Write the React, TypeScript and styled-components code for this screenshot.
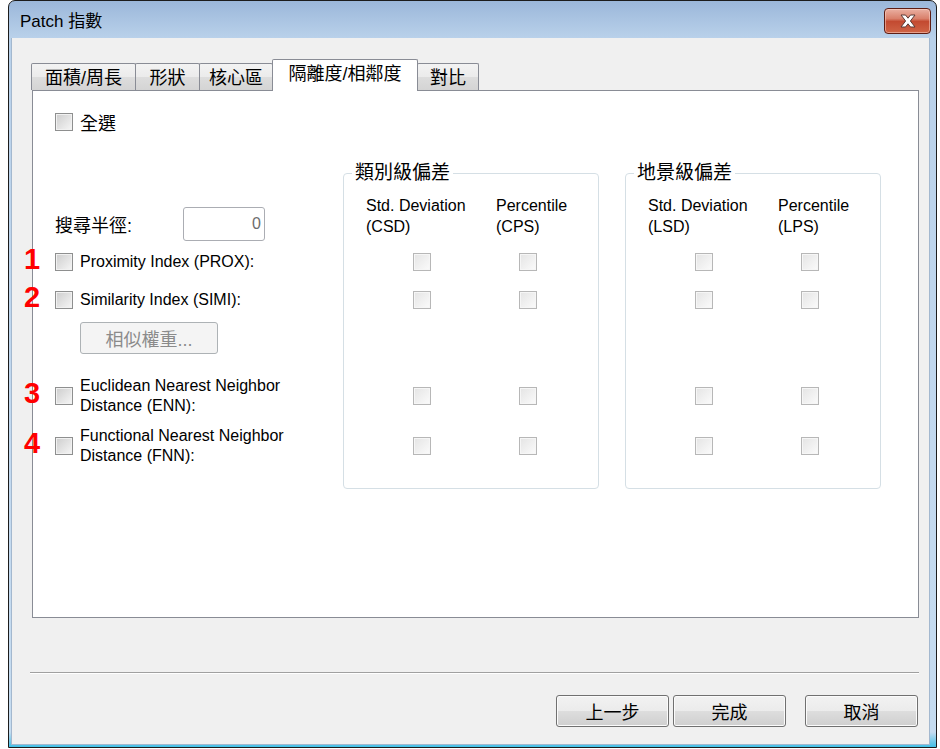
import React from 'react'
import styled, { createGlobalStyle } from 'styled-components'

const FONT = `'Liberation Sans', 'Noto Sans CJK TC', sans-serif`
const ROWS = '69px 38px 38px 55px 44px 56px'

const GlobalStyle = createGlobalStyle`
  html, body {
    margin: 0;
    padding: 0;
    background: #ffffff;
  }
  body {
    font-family: ${FONT};
    color: #000;
  }
  * {
    box-sizing: border-box;
  }
`

const Window = styled.div`
  margin-left: 8px;
  width: 929px;
  height: 748px;
  border: 1px solid #1c1c1c;
  border-radius: 7px 7px 0 0;
  background: linear-gradient(#9bb7da 0, #b9d1ea 37px, #c3d9ef 60%, #c6dcf0 98%, #41c0e6 100%);
  display: flex;
  flex-direction: column;
  overflow: hidden;
`

const TitleBar = styled.div`
  height: 37px;
  flex: none;
  display: flex;
  align-items: center;
  justify-content: space-between;
  padding: 0 5px 0 11px;
`

const Title = styled.span`
  font-size: 17px;
  color: #000;
`

const CloseButton = styled.div`
  align-self: flex-start;
  margin-top: 7px;
  width: 47px;
  height: 26px;
  border: 1px solid #5e1d14;
  border-radius: 4px;
  background: linear-gradient(#eab0a2 0%, #d9806b 40%, #c34a31 52%, #cf6446 100%);
  box-shadow: inset 0 0 0 1px rgba(255, 220, 210, 0.5);
  display: flex;
  align-items: center;
  justify-content: center;
`

const Client = styled.div`
  flex: 1;
  margin: 0 6px 2px 2px;
  border: 1px solid #a3b8cf;
  border-top: none;
  background: #f0f0f0;
  display: flex;
  flex-direction: column;
`

const TabStrip = styled.div`
  margin-top: 21px;
  padding-left: 19px;
  height: 31px;
  display: flex;
  align-items: flex-end;
`

const Tab = styled.div<{ $w: number; $active?: boolean }>`
  width: ${({ $w }) => $w}px;
  height: ${({ $active }) => ($active ? 32 : 27)}px;
  margin-left: -1px;
  margin-bottom: ${({ $active }) => ($active ? -1 : 0)}px;
  position: relative;
  z-index: ${({ $active }) => ($active ? 2 : 1)};
  border: 1px solid #898c95;
  border-bottom: none;
  border-radius: 2px 2px 0 0;
  background: ${({ $active }) =>
    $active ? '#ffffff' : 'linear-gradient(#f3f3f3, #ebebeb 50%, #dddddd 51%, #d4d4d4)'};
  display: flex;
  align-items: center;
  justify-content: center;
  padding-bottom: ${({ $active }) => ($active ? 7 : 2)}px;
  font-size: 18px;
  white-space: nowrap;
  &:first-child {
    margin-left: 0;
  }
`

const Panel = styled.div`
  margin-left: 20px;
  width: 887px;
  height: 528px;
  border: 1px solid #898c95;
  background: #ffffff;
  padding: 21px 0 0 22px;
  display: flex;
  flex-direction: column;
`

const CheckRow = styled.div`
  position: relative;
  display: flex;
  align-items: center;
  gap: 7px;
  font-size: 16px;
`

const SelectAll = styled(CheckRow)`
  height: 20px;
  font-size: 18px;
`

const Box = styled.span<{ $disabled?: boolean }>`
  display: inline-block;
  flex: none;
  width: 18px;
  height: 18px;
  border: 1px solid ${({ $disabled }) => ($disabled ? '#b7b7b7' : '#8e8f8f')};
  background: ${({ $disabled }) =>
    $disabled
      ? 'linear-gradient(135deg, #e4e4e4, #fbfbfb)'
      : 'linear-gradient(135deg, #cdcdcd, #f6f6f6)'};
  box-shadow: inset 0 0 0 1px ${({ $disabled }) => ($disabled ? '#f6f6f6' : '#f1f1f1')};
`

const Marker = styled.span`
  position: absolute;
  left: -31px;
  top: 50%;
  transform: translateY(-58%);
  font-family: 'Liberation Sans', sans-serif;
  font-weight: bold;
  font-size: 29px;
  line-height: 1;
  color: #ff0000;
`

const Main = styled.div`
  margin-top: 41px;
  display: flex;
  align-items: flex-start;
`

const LeftColumn = styled.div`
  width: 288px;
  padding-top: 1px;
  display: grid;
  grid-template-rows: ${ROWS};
`

const SearchRow = styled.div`
  align-self: end;
  margin-bottom: 2px;
  display: flex;
  align-items: center;
`

const SearchLabel = styled.span`
  width: 128px;
  font-size: 18px;
`

const NumberInput = styled.div`
  width: 82px;
  height: 34px;
  border: 1px solid #abadb3;
  border-radius: 3px;
  background: #ffffff;
  display: flex;
  align-items: center;
  justify-content: flex-end;
  padding-right: 3px;
  font-size: 16px;
  color: #6d6d6d;
`

const TwoLine = styled.span`
  line-height: 20px;
`

const WeightButton = styled.div`
  align-self: start;
  margin: 3px 0 0 25px;
  width: 138px;
  height: 32px;
  border: 1px solid #adb2b5;
  border-radius: 3px;
  background: #f4f4f4;
  color: #8b8b8b;
  font-size: 18px;
  display: flex;
  align-items: center;
  justify-content: center;
`

const Group = styled.div<{ $gap?: number }>`
  position: relative;
  margin-left: ${({ $gap }) => $gap ?? 0}px;
  width: 256px;
  height: 316px;
  border: 1px solid #d5dfe5;
  border-radius: 4px;
  padding-left: 25px;
  display: grid;
  grid-template-columns: 106px 106px;
  grid-template-rows: ${ROWS};
`

const Legend = styled.span`
  position: absolute;
  left: 8px;
  top: -12px;
  padding: 0 3px;
  background: #ffffff;
  font-size: 19px;
  line-height: 22px;
`

const ColHeader = styled.div<{ $shift: number }>`
  align-self: end;
  justify-self: start;
  margin: 0 0 6px ${({ $shift }) => $shift}px;
  font-size: 16px;
  line-height: 21px;
  white-space: nowrap;
`

const Cell = styled.div`
  display: flex;
  align-items: center;
  justify-content: center;
`

const Separator = styled.div`
  margin: 54px 0 0 18px;
  width: 889px;
  height: 2px;
  border-top: 1px solid #a0a0a0;
  border-bottom: 1px solid #ffffff;
`

const ButtonBar = styled.div`
  margin-top: 21px;
  padding-right: 11px;
  display: flex;
  justify-content: flex-end;
`

const DialogButton = styled.div<{ $gap: number }>`
  margin-left: ${({ $gap }) => $gap}px;
  width: 113px;
  height: 32px;
  border: 1px solid #707070;
  border-radius: 3px;
  background: linear-gradient(#f2f2f2, #ebebeb 50%, #dddddd 51%, #cfcfcf);
  box-shadow: inset 0 0 0 1px #fbfbfb;
  display: flex;
  align-items: center;
  justify-content: center;
  font-size: 18px;
`

const tabs = [
  { label: '面積/周長', w: 105 },
  { label: '形狀', w: 65 },
  { label: '核心區', w: 74 },
  { label: '隔離度/相鄰度', w: 146, active: true },
  { label: '對比', w: 62 },
]

const metrics = [
  { n: '1', lines: ['Proximity Index (PROX):'] },
  { n: '2', lines: ['Similarity Index (SIMI):'] },
  { n: '3', lines: ['Euclidean Nearest Neighbor', 'Distance (ENN):'] },
  { n: '4', lines: ['Functional Nearest Neighbor', 'Distance (FNN):'] },
]

const groups = [
  { title: '類別級偏差', cols: ['CSD', 'CPS'], gap: 0 },
  { title: '地景級偏差', cols: ['LSD', 'LPS'], gap: 26 },
]

// grid rows inside each group that carry checkboxes (row 4 is the weight button row)
const checkRows = [2, 3, 5, 6]

const CloseIcon = () => (
  <svg width="20" height="14" viewBox="0 0 20 14">
    <path
      d="M3 1 H7.5 L10 4.2 L12.5 1 H17 L12.4 7 L17 13 H12.5 L10 9.8 L7.5 13 H3 L7.6 7 Z"
      fill="#ffffff"
      stroke="#5a3a36"
      strokeWidth="1"
      strokeLinejoin="round"
    />
  </svg>
)

const MetricRow: React.FC<{ n: string; lines: string[]; row: number }> = ({ n, lines, row }) => (
  <CheckRow style={{ gridRow: row }}>
    <Marker>{n}</Marker>
    <Box />
    <TwoLine>
      {lines.map((l, i) => (
        <React.Fragment key={l}>
          {i > 0 && <br />}
          {l}
        </React.Fragment>
      ))}
    </TwoLine>
  </CheckRow>
)

export default function App() {
  return (
    <>
      <GlobalStyle />
      <Window>
        <TitleBar>
          <Title>Patch 指數</Title>
          <CloseButton>
            <CloseIcon />
          </CloseButton>
        </TitleBar>
        <Client>
          <TabStrip>
            {tabs.map(t => (
              <Tab key={t.label} $w={t.w} $active={t.active}>
                {t.label}
              </Tab>
            ))}
          </TabStrip>
          <Panel>
            <SelectAll>
              <Box />
              <span>全選</span>
            </SelectAll>
            <Main>
              <LeftColumn>
                <SearchRow>
                  <SearchLabel>搜尋半徑:</SearchLabel>
                  <NumberInput>0</NumberInput>
                </SearchRow>
                <MetricRow {...metrics[0]} row={2} />
                <MetricRow {...metrics[1]} row={3} />
                <WeightButton>相似權重...</WeightButton>
                <MetricRow {...metrics[2]} row={5} />
                <MetricRow {...metrics[3]} row={6} />
              </LeftColumn>
              {groups.map(g => (
                <Group key={g.title} $gap={g.gap}>
                  <Legend>{g.title}</Legend>
                  <ColHeader $shift={-3}>
                    Std. Deviation
                    <br />({g.cols[0]})
                  </ColHeader>
                  <ColHeader $shift={21}>
                    Percentile
                    <br />({g.cols[1]})
                  </ColHeader>
                  {checkRows.map(r => (
                    <React.Fragment key={r}>
                      <Cell style={{ gridRow: r, gridColumn: 1 }}>
                        <Box $disabled />
                      </Cell>
                      <Cell style={{ gridRow: r, gridColumn: 2 }}>
                        <Box $disabled />
                      </Cell>
                    </React.Fragment>
                  ))}
                </Group>
              ))}
            </Main>
          </Panel>
          <Separator />
          <ButtonBar>
            <DialogButton $gap={0}>上一步</DialogButton>
            <DialogButton $gap={4}>完成</DialogButton>
            <DialogButton $gap={19}>取消</DialogButton>
          </ButtonBar>
        </Client>
      </Window>
    </>
  )
}
